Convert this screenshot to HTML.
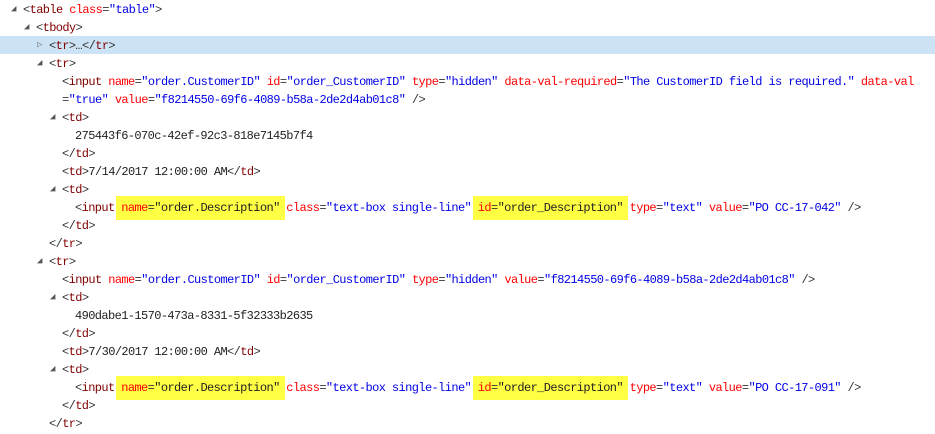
<!DOCTYPE html>
<html><head><meta charset="utf-8"><style>
body{margin:0;width:935px;height:434px;overflow:hidden;background:#fff;font-family:"Liberation Mono",monospace;font-size:12px;letter-spacing:-0.6px;}
.l{height:18px;line-height:18px;white-space:pre;position:relative;color:#333;box-sizing:border-box;padding-top:1px;}
.sel{background:#cce3f5;}
.t{color:#800000;}
.a{color:#f00;}
.v{color:#0000e6;}
.k{color:#222;}
.hl{background:#ffff44;padding:5px 5px 5px;margin:0 -5px;}
.hl .v{color:#222;}
.ar{position:absolute;font-size:9px;letter-spacing:0;color:#555;top:0;}
</style></head><body>
<div class="l" style="padding-left:23px"><span class="ar" style="left:11px">◢</span>&lt;<span class="t">table</span> <span class="a">class</span>=<span class="v">"table"</span>&gt;</div>
<div class="l" style="padding-left:36px"><span class="ar" style="left:24px">◢</span>&lt;<span class="t">tbody</span>&gt;</div>
<div class="l sel" style="padding-left:49px"><span class="ar" style="left:37px;color:#777">▷</span>&lt;<span class="t">tr</span>&gt;…&lt;/<span class="t">tr</span>&gt;</div>
<div class="l" style="padding-left:49px"><span class="ar" style="left:37px">◢</span>&lt;<span class="t">tr</span>&gt;</div>
<div class="l" style="padding-left:62px">&lt;<span class="t">input</span> <span class="a">name</span>=<span class="v">"order.CustomerID"</span> <span class="a">id</span>=<span class="v">"order_CustomerID"</span> <span class="a">type</span>=<span class="v">"hidden"</span> <span class="a">data-val-required</span>=<span class="v">"The CustomerID field is required."</span> <span class="a">data-val</span></div>
<div class="l" style="padding-left:62px">=<span class="v">"true"</span> <span class="a">value</span>=<span class="v">"f8214550-69f6-4089-b58a-2de2d4ab01c8"</span> /&gt;</div>
<div class="l" style="padding-left:62px"><span class="ar" style="left:50px">◢</span>&lt;<span class="t">td</span>&gt;</div>
<div class="l k" style="padding-left:75px">275443f6-070c-42ef-92c3-818e7145b7f4</div>
<div class="l" style="padding-left:62px">&lt;/<span class="t">td</span>&gt;</div>
<div class="l" style="padding-left:62px">&lt;<span class="t">td</span>&gt;<span class="k">7/14/2017 12:00:00 AM</span>&lt;/<span class="t">td</span>&gt;</div>
<div class="l" style="padding-left:62px"><span class="ar" style="left:50px">◢</span>&lt;<span class="t">td</span>&gt;</div>
<div class="l" style="padding-left:75px">&lt;<span class="t">input</span> <span class="hl"><span class="a">name</span>=<span class="v">"order.Description"</span></span> <span class="a">class</span>=<span class="v">"text-box single-line"</span> <span class="hl"><span class="a">id</span>=<span class="v">"order_Description"</span></span> <span class="a">type</span>=<span class="v">"text"</span> <span class="a">value</span>=<span class="v">"PO CC-17-042"</span> /&gt;</div>
<div class="l" style="padding-left:62px">&lt;/<span class="t">td</span>&gt;</div>
<div class="l" style="padding-left:49px">&lt;/<span class="t">tr</span>&gt;</div>
<div class="l" style="padding-left:49px"><span class="ar" style="left:37px">◢</span>&lt;<span class="t">tr</span>&gt;</div>
<div class="l" style="padding-left:62px">&lt;<span class="t">input</span> <span class="a">name</span>=<span class="v">"order.CustomerID"</span> <span class="a">id</span>=<span class="v">"order_CustomerID"</span> <span class="a">type</span>=<span class="v">"hidden"</span> <span class="a">value</span>=<span class="v">"f8214550-69f6-4089-b58a-2de2d4ab01c8"</span> /&gt;</div>
<div class="l" style="padding-left:62px"><span class="ar" style="left:50px">◢</span>&lt;<span class="t">td</span>&gt;</div>
<div class="l k" style="padding-left:75px">490dabe1-1570-473a-8331-5f32333b2635</div>
<div class="l" style="padding-left:62px">&lt;/<span class="t">td</span>&gt;</div>
<div class="l" style="padding-left:62px">&lt;<span class="t">td</span>&gt;<span class="k">7/30/2017 12:00:00 AM</span>&lt;/<span class="t">td</span>&gt;</div>
<div class="l" style="padding-left:62px"><span class="ar" style="left:50px">◢</span>&lt;<span class="t">td</span>&gt;</div>
<div class="l" style="padding-left:75px">&lt;<span class="t">input</span> <span class="hl"><span class="a">name</span>=<span class="v">"order.Description"</span></span> <span class="a">class</span>=<span class="v">"text-box single-line"</span> <span class="hl"><span class="a">id</span>=<span class="v">"order_Description"</span></span> <span class="a">type</span>=<span class="v">"text"</span> <span class="a">value</span>=<span class="v">"PO CC-17-091"</span> /&gt;</div>
<div class="l" style="padding-left:62px">&lt;/<span class="t">td</span>&gt;</div>
<div class="l" style="padding-left:49px">&lt;/<span class="t">tr</span>&gt;</div>
</body></html>
